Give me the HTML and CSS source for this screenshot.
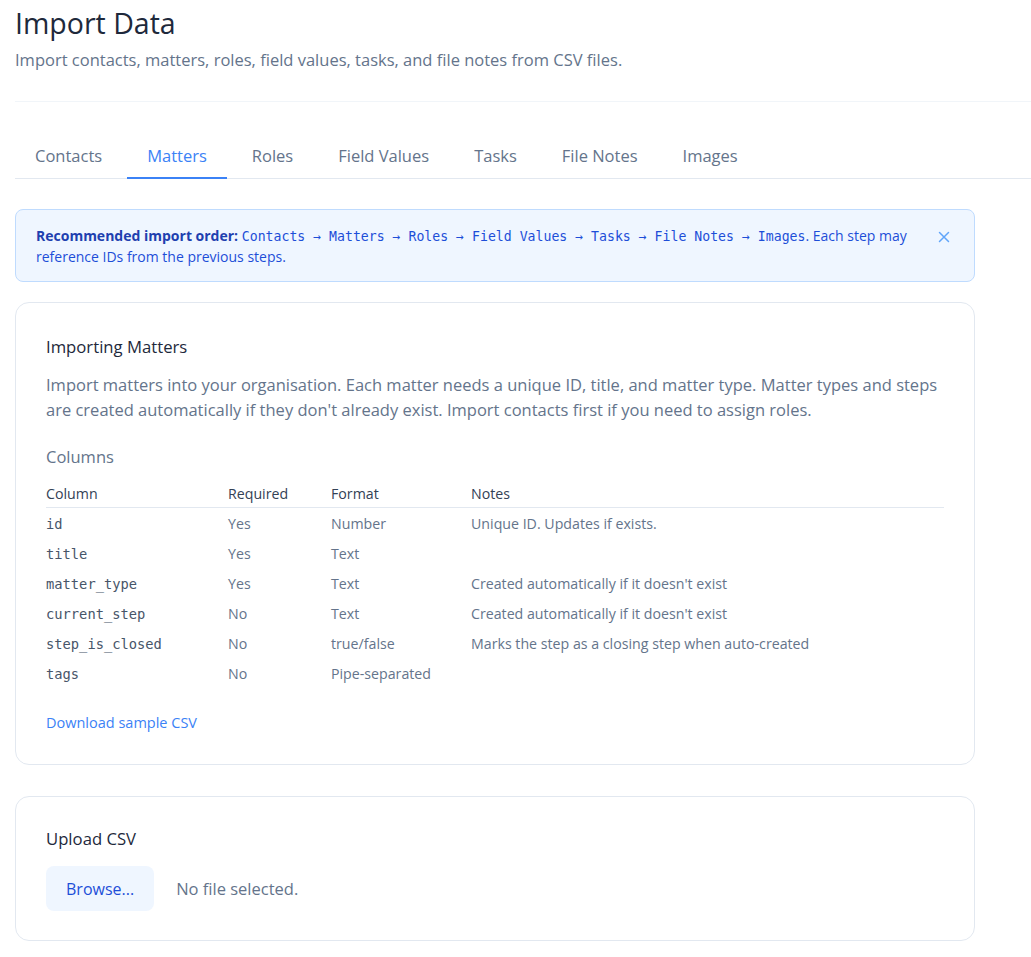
FILE: index.html
```html
<!DOCTYPE html>
<html lang="en">
<head>
    <meta charset="UTF-8">
    <meta name="viewport" content="width=device-width, initial-scale=1.0">
    <title>Import Data</title>
    <link rel="stylesheet" href="styles.css">
</head>
<body>

<div class="page">
    <div class="page-header">
        <h1>Import Data</h1>
        <p class="subtitle">Import contacts, matters, roles, field values, tasks, and file notes from CSV files.</p>
    </div>

    <nav class="tabs">
        <a class="tab">Contacts</a>
        <a class="tab active">Matters</a>
        <a class="tab">Roles</a>
        <a class="tab">Field Values</a>
        <a class="tab">Tasks</a>
        <a class="tab">File Notes</a>
        <a class="tab">Images</a>
    </nav>

    <div class="content">
        <div class="alert">
            <p>
                <strong>Recommended import order:</strong>
                <code>Contacts → Matters → Roles → Field Values → Tasks → File Notes → Images</code>. Each step may reference IDs from the previous steps.
            </p>
            <button class="alert-close" aria-label="Close">
                <svg width="12" height="12" viewBox="0 0 12 12"><path d="M1.5 1.5l9 9M10.5 1.5l-9 9" stroke="currentColor" stroke-width="1.5" fill="none" stroke-linecap="round"/></svg>
            </button>
        </div>

        <div class="card">
            <h3>Importing Matters</h3>
            <p class="card-desc">Import matters into your organisation. Each matter needs a unique ID, title, and matter type. Matter types and steps are created automatically if they don't already exist. Import contacts first if you need to assign roles.</p>

            <h4>Columns</h4>
            <table class="columns">
                <thead>
                    <tr>
                        <th class="col-name">Column</th>
                        <th class="col-req">Required</th>
                        <th class="col-format">Format</th>
                        <th>Notes</th>
                    </tr>
                </thead>
                <tbody>
                    <tr><td><code>id</code></td><td>Yes</td><td>Number</td><td>Unique ID. Updates if exists.</td></tr>
                    <tr><td><code>title</code></td><td>Yes</td><td>Text</td><td></td></tr>
                    <tr><td><code>matter_type</code></td><td>Yes</td><td>Text</td><td>Created automatically if it doesn't exist</td></tr>
                    <tr><td><code>current_step</code></td><td>No</td><td>Text</td><td>Created automatically if it doesn't exist</td></tr>
                    <tr><td><code>step_is_closed</code></td><td>No</td><td>true/false</td><td>Marks the step as a closing step when auto-created</td></tr>
                    <tr><td><code>tags</code></td><td>No</td><td>Pipe-separated</td><td></td></tr>
                </tbody>
            </table>

            <a class="download" href="#">Download sample CSV</a>
        </div>

        <div class="card upload">
            <h3>Upload CSV</h3>
            <div class="file-row">
                <button class="browse">Browse...</button>
                <span class="file-name">No file selected.</span>
            </div>
        </div>
    </div>
</div>

</body>
</html>
```

FILE: styles.css
```css
body {
    font-family: "Open Sans", "Noto Sans", sans-serif;
    background-color: #fff;
    color: #1e293b;
    margin: 0;
}

.page {
    padding: 0 0 0 15px;
}

.page-header {
    padding-top: 4px;
    padding-bottom: 30px;
    border-bottom: 1px solid #f1f5f9;
}

h1 {
    margin: 0;
    font-size: 28.5px;
    font-weight: 400;
    line-height: 38px;
    color: #1e293b;
}

.subtitle {
    margin: 7px 0 0;
    font-size: 16.5px;
    line-height: 22px;
    color: #64748b;
}

.tabs {
    display: flex;
    gap: 5px;
    margin-top: 32px;
    border-bottom: 1px solid #e2e8f0;
}

.tab {
    padding: 10px 20px 10px;
    font-size: 16.5px;
    color: #64748b;
    border-bottom: 2px solid transparent;
    margin-bottom: -1px;
    cursor: pointer;
}

.tab.active {
    color: #3b82f6;
    border-bottom-color: #3b82f6;
}

.content {
    width: 960px;
    padding-top: 30px;
}

.alert {
    display: flex;
    align-items: flex-start;
    gap: 16px;
    background-color: #eff6ff;
    border: 1px solid #bfdbfe;
    border-radius: 8px;
    padding: 15px 20px 14px;
    color: #1d4ed8;
    font-size: 14px;
    line-height: 21px;
}

.alert p {
    margin: 0;
    flex: 1;
}

.alert strong {
    color: #1e40af;
}

.alert code {
    font-family: "DejaVu Sans Mono", monospace;
    font-size: 13.2px;
    line-height: 1;
}

.alert-close {
    background: none;
    border: none;
    padding: 4px;
    margin-top: 2px;
    color: #60a5fa;
    cursor: pointer;
}

.card {
    margin-top: 20px;
    border: 1px solid #e2e8f0;
    border-radius: 14px;
    padding: 32px 30px 31px;
}

.card h3 {
    margin: 0 0 14px;
    font-size: 16.7px;
    font-weight: 400;
    color: #1e293b;
}

.card-desc {
    margin: 0;
    font-size: 16.5px;
    line-height: 25px;
    color: #64748b;
}

.card h4 {
    margin: 23px 0 12px;
    font-size: 16.5px;
    font-weight: 400;
    color: #64748b;
}

.columns {
    width: 100%;
    border-collapse: collapse;
    font-size: 14.2px;
    color: #64748b;
}

.columns th {
    text-align: left;
    font-weight: 400;
    color: #334155;
    padding: 4px 0 4px;
    border-bottom: 1px solid #e2e8f0;
}

.columns td {
    padding: 0;
    height: 30px;
}

.col-name { width: 182px; }
.col-req { width: 103px; }
.col-format { width: 140px; }

.columns code {
    font-family: "DejaVu Sans Mono", monospace;
    font-size: 13.75px;
    color: #475569;
}

.download {
    display: inline-block;
    margin-top: 25px;
    font-size: 14.5px;
    color: #3b82f6;
    text-decoration: none;
}

.card.upload {
    margin-top: 31px;
    padding-top: 30px;
    padding-bottom: 29px;
}

.file-row {
    display: flex;
    align-items: center;
    gap: 22px;
    margin-top: 16px;
}

.browse {
    background-color: #eff6ff;
    color: #1d4ed8;
    border: none;
    border-radius: 8px;
    padding: 0 20px;
    height: 45px;
    font-family: inherit;
    font-size: 16px;
    cursor: pointer;
}

.file-name {
    font-size: 16.5px;
    color: #64748b;
}
```
